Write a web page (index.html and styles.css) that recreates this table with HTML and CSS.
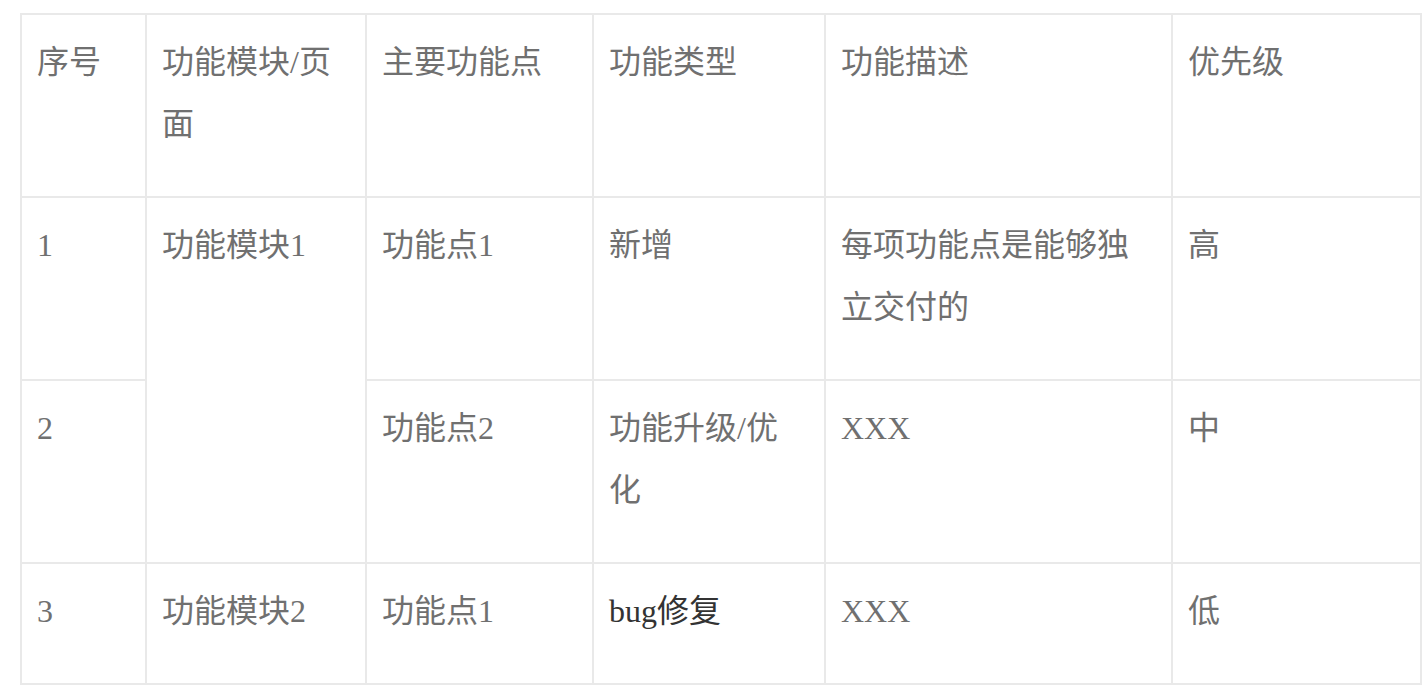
FILE: index.html
```html
<!DOCTYPE html>
<html lang="zh">
<head>
<meta charset="utf-8">
<title>功能列表</title>
<link rel="stylesheet" href="styles.css">
</head>
<body>
<div class="page">
  <table class="spec">
    <colgroup>
      <col class="c1"><col class="c2"><col class="c3"><col class="c4"><col class="c5"><col class="c6">
    </colgroup>
    <tbody>
      <tr>
        <td>序号</td>
        <td>功能模块/页面</td>
        <td>主要功能点</td>
        <td>功能类型</td>
        <td>功能描述</td>
        <td>优先级</td>
      </tr>
      <tr>
        <td>1</td>
        <td rowspan="2">功能模块1</td>
        <td>功能点1</td>
        <td>新增</td>
        <td>每项功能点是能够独立交付的</td>
        <td>高</td>
      </tr>
      <tr>
        <td>2</td>
        <td>功能点2</td>
        <td>功能升级/优化</td>
        <td>XXX</td>
        <td>中</td>
      </tr>
      <tr>
        <td>3</td>
        <td>功能模块2</td>
        <td>功能点1</td>
        <td class="dark">bug修复</td>
        <td>XXX</td>
        <td>低</td>
      </tr>
    </tbody>
  </table>
</div>
</body>
</html>
```
FILE: styles.css
```css
html, body {
  margin: 0;
  padding: 0;
  background: #ffffff;
}
.page {
  padding: 13px 0 0 20px;
}
.spec {
  border-collapse: collapse;
  table-layout: fixed;
  width: 1400px;
  font-family: "Liberation Serif", "Noto Sans CJK SC", serif;
  font-size: 32px;
  color: #707070;
}
.spec td {
  border: 2px solid #e9e9e9;
  padding: 16px 16px 41px 15px;
  line-height: 62px;
  vertical-align: top;
  word-break: break-all;
}
.c1 { width: 125px; }
.c2 { width: 220px; }
.c3 { width: 227px; }
.c4 { width: 232px; }
.c5 { width: 347px; }
.c6 { width: 249px; }
.spec td.dark {
  color: #333333;
}
```
